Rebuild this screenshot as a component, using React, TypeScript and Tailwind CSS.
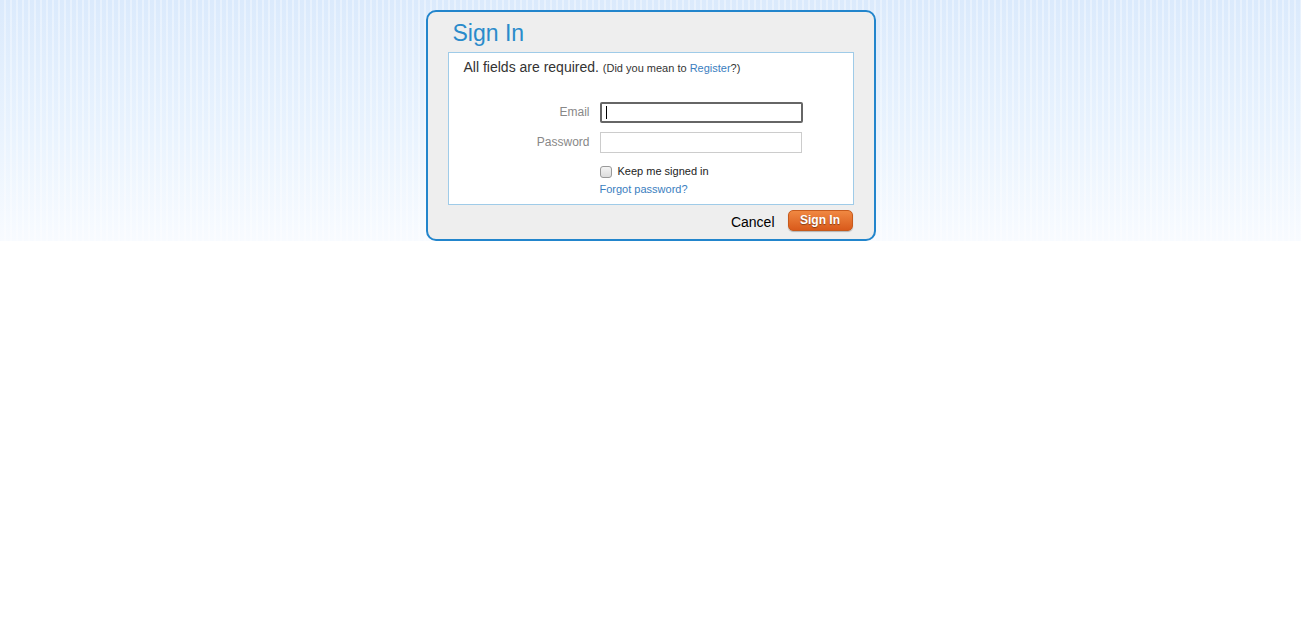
import React from "react";

export default function App() {
  return (
    <div
      className="min-h-[639px] w-full bg-white bg-no-repeat bg-[size:100%_241px] bg-[image:repeating-linear-gradient(90deg,rgba(255,255,255,0)_0px,rgba(255,255,255,0)_4px,rgba(255,255,255,0.35)_4px,rgba(255,255,255,0.35)_6px),linear-gradient(180deg,#dbeafc_0%,#e9f3fe_55%,#f8fbff_100%)] pt-[10px]"
      style={{ fontFamily: '"Liberation Sans", Arial, sans-serif' }}
    >
      <div className="mx-auto w-[450px] rounded-[10px] border-2 border-[#2285cc] bg-[#eeeeee]">
        <div className="h-[40px] pl-[25px] pt-[7px]">
          <h1 className="text-[23px] leading-[28px] text-[#2a8bcb]">Sign In</h1>
        </div>
        <div className="mx-[20px] h-[153px] border border-[#9fcbe8] bg-white">
          <p className="pl-[15px] pt-[5px] text-[14px] leading-[18px] text-[#333]">
            All fields are required.{" "}
            <span className="text-[11px]">
              (Did you mean to <a className="text-[#3a7ec0]">Register</a>?)
            </span>
          </p>
          <div className="mt-[25px] flex items-center">
            <label className="mb-[2px] w-[141px] text-right text-[12px] text-[#888]">Email</label>
            <div className="relative ml-[10px] h-[21px] w-[203px] rounded-[2px] border-2 border-[#666] bg-white">
              <span className="absolute left-[4px] top-[2px] h-[13px] w-px bg-black" />
            </div>
          </div>
          <div className="mt-[9px] flex items-center">
            <label className="mb-[2px] w-[141px] text-right text-[12px] text-[#888]">Password</label>
            <div className="ml-[10px] h-[21px] w-[202px] border border-[#cccccc] bg-white" />
          </div>
          <div className="mt-[12px] flex items-center pl-[151px]">
            <span className="h-[12px] w-[12px] rounded-[3px] border border-[#999] bg-[linear-gradient(#f4f4f4,#dcdcdc)]" />
            <span className="ml-[6px] text-[11px] leading-[13px] text-[#222]">Keep me signed in</span>
          </div>
          <div className="mt-[5px] pl-[151px] text-[11px] leading-[13px]">
            <a className="text-[#3a7ec0]">Forgot password?</a>
          </div>
        </div>
        <div className="flex h-[34px] items-start justify-end pr-[21px] pt-[5px]">
          <span className="mr-[13px] mt-[4px] text-[14px] leading-[16px] text-black">Cancel</span>
          <button className="h-[21px] w-[65px] rounded-[5px] border border-[#c75a1c] bg-[linear-gradient(#f08842,#d95a1b)] text-[12px] font-bold leading-[19px] text-white shadow-[0_1px_1px_rgba(0,0,0,0.25)] [text-shadow:0_1px_1px_rgba(0,0,0,0.4)]">
            Sign In
          </button>
        </div>
      </div>
    </div>
  );
}
